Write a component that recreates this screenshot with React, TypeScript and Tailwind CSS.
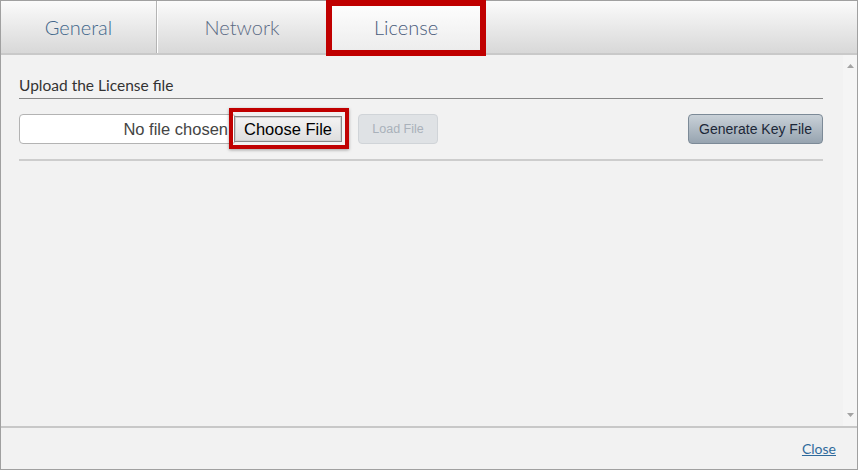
import React from 'react';

const lato = { fontFamily: 'Lato, "Open Sans", sans-serif' };
const arial = { fontFamily: '"Liberation Sans", Arial, sans-serif' };

export default function App() {
    return (
        <div className="relative w-[858px] h-[470px] bg-white overflow-hidden">
            <div className="w-full h-full border border-[#a0a0a0] flex flex-col bg-[#f2f2f2]">
                {/* Tab bar */}
                <div className="h-[54px] shrink-0 flex bg-gradient-to-b from-[#fbfbfb] to-[#d8d8d8] border-b-2 border-[#c9c9c9]" style={lato}>
                    <div className="w-[156px] flex items-center justify-center text-[20px] font-light text-[#41678a] border-r border-[#b4b4b4]">
                        General
                    </div>
                    <div className="w-[1px] bg-white" />
                    <div className="w-[168px] flex items-center justify-center text-[20px] font-light text-[#5b6a84]">
                        Network
                    </div>
                    <div className="w-[160px] flex items-center justify-center text-[20px] font-light text-[#4a5c7b] bg-gradient-to-b from-[#ffffff] to-[#ececec]">
                        License
                    </div>
                    <div className="flex-1" />
                </div>

                {/* Body */}
                <div className="flex-1 flex min-h-0">
                    <div className="flex-1 pl-[18px] pr-[20px] pt-[21px]">
                        <div className="text-[15.5px] text-[#333] leading-[19px] pb-[3px] border-b border-[#888]" style={lato}>
                            Upload the License file
                        </div>
                        <div className="flex items-center mt-[15px] h-[30px]">
                            <div className="w-[217px] h-[30px] bg-white border border-[#b3b3b3] rounded-[4px] flex items-center justify-end pr-[7px] text-[16.5px] text-[#444]" style={arial}>
                                No file chosen
                            </div>
                            <div className="h-[26px] ml-[-2px] w-[108px] flex items-center justify-center text-[16.5px] text-black bg-gradient-to-b from-[#f4f4f4] to-[#dedede] border border-[#8a8a8a] outline outline-1 outline-[#cfcfcf] -outline-offset-2" style={arial}>
                                Choose File
                            </div>
                            <div className="ml-[16px] w-[80px] h-[30px] rounded-[4px] bg-[#dfe2e5] border border-[#d0d4d8] flex items-center justify-center text-[12.5px] text-[#a9b1ba]" style={arial}>
                                Load File
                            </div>
                            <div className="flex-1" />
                            <div className="w-[135px] h-[30px] rounded-[4px] bg-gradient-to-b from-[#c9d1d8] to-[#97a4b0] border border-[#7c8a97] flex items-center justify-center text-[14px] text-[#1c2738]" style={arial}>
                                Generate Key File
                            </div>
                        </div>
                        <div className="mt-[15px] h-[2px] bg-[#cdcdcd]" />
                    </div>
                    {/* Scrollbar */}
                    <div className="w-[14px] bg-[#f5f5f5] flex flex-col items-center justify-between py-[9px]">
                        <svg width="7" height="4" viewBox="0 0 7 4"><path d="M3.5 0 L7 4 L0 4 Z" fill="#a3a3a3" /></svg>
                        <svg width="7" height="4" viewBox="0 0 7 4"><path d="M0 0 L7 0 L3.5 4 Z" fill="#a3a3a3" /></svg>
                    </div>
                </div>

                {/* Footer */}
                <div className="h-[43px] shrink-0 border-t-2 border-[#c8c8c8] flex items-center justify-end pr-[21px]">
                    <a href="#" className="text-[14px] text-[#2f6a9c] underline" style={lato}>Close</a>
                </div>
            </div>

            {/* Highlight annotations */}
            <div className="absolute left-[326px] top-0 w-[160px] h-[56px] border-[6px] border-[#c00000]" />
            <div className="absolute left-[229px] top-[108px] w-[120px] h-[41px] border-[4px] border-[#c00000] shadow-[0_1px_3px_rgba(0,0,0,0.35)]" />
        </div>
    );
}
